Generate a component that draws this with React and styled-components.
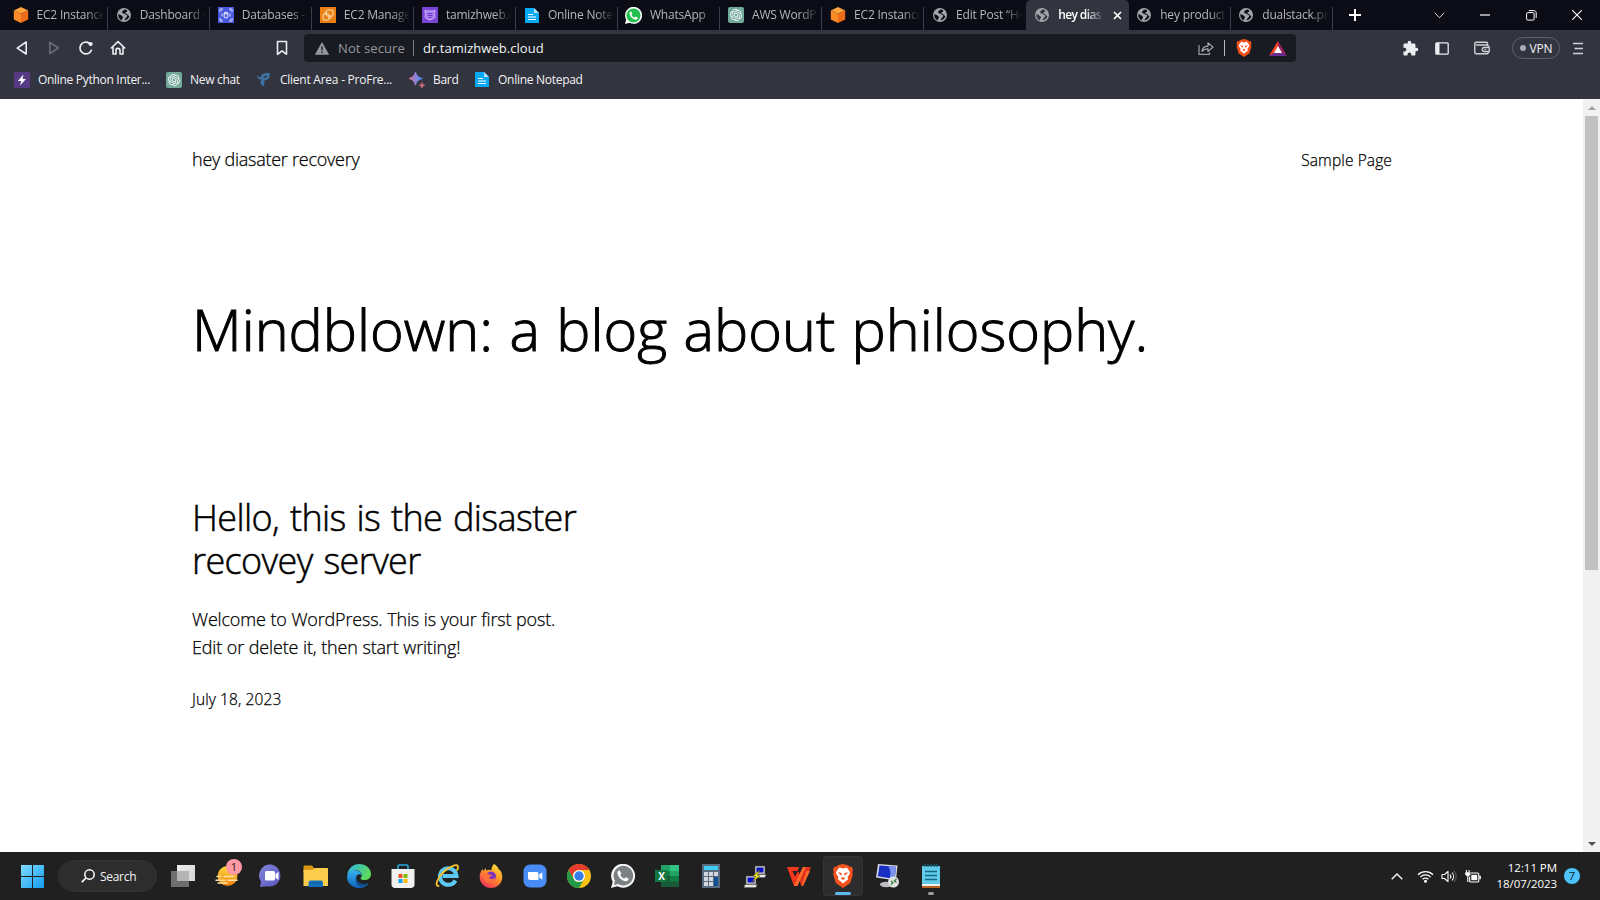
import React from "react";
import styled, { createGlobalStyle, css } from "styled-components";
import { MdExtension } from "react-icons/md";
import { SiOpenai } from "react-icons/si";

const GlobalStyle = createGlobalStyle`
  *, *::before, *::after { box-sizing: border-box; }
  body { margin: 0; overflow: hidden; font-family: "Open Sans", "Noto Sans", sans-serif; background: #fff; }
  svg { display: block; flex: none; }
`;

const Screen = styled.div`
  width: 1600px;
  height: 900px;
  display: flex;
  flex-direction: column;
  overflow: hidden;
`;

const Row = styled.div`
  display: flex;
  align-items: center;
`;

const Cell = styled(Row)`
  flex: none;
  justify-content: center;
  width: ${(p) => p.$w}px;
  height: 100%;
`;

const Spacer = styled.i`
  flex: none;
  width: ${(p) => p.$w}px;
`;

const Grow = styled.i`
  flex: 1;
`;

const IconSlot = styled(Row)`
  flex: none;
  width: 16px;
  justify-content: center;
`;

const Text = styled.span`
  flex: none;
  white-space: nowrap;
  font-size: ${(p) => p.$size}px;
  letter-spacing: ${(p) => p.$track || 0}px;
  color: ${(p) => p.$color || "#f2f3f5"};
`;

/* Light cut thickened slightly, giving a semilight weight */
const semilight = css`
  font-weight: 300;
  -webkit-text-stroke: ${(p) => p.$stroke || 0.25}px currentColor;
`;

/* ---------- tab strip ---------- */
const TabStrip = styled(Row)`
  height: 30px;
  background: #0b0c15;
  padding-left: 6px;
`;

const Tab = styled(Row)`
  flex: none;
  width: 102.05px;
  height: 30px;
  padding: 0 4px 0 ${(p) => (p.$first ? 6.5 : 7.7)}px;
  position: relative;
  ${(p) =>
    p.$active
      ? css`
          padding-right: 7px;
          background: #32343f;
          border-radius: 5px 5px 0 0;
        `
      : !p.$beforeActive &&
        css`
          &::after {
            content: "";
            position: absolute;
            right: 0;
            top: 7px;
            bottom: 0;
            width: 1px;
            background: #3c3d46;
          }
        `}
`;

const TabTitle = styled.span`
  margin-left: 8px;
  flex: ${(p) => (p.$active ? "0 0 46px" : "1 1 0")};
  min-width: 0;
  overflow: hidden;
  white-space: nowrap;
  font-size: 12px;
  line-height: 18px;
  letter-spacing: ${(p) => p.$track}px;
  font-weight: ${(p) => (p.$active ? 600 : 400)};
  color: ${(p) => (p.$active ? "#fff" : "#b6b7bd")};
  mask-image: linear-gradient(to right, #000 calc(100% - 18px), transparent 100%);
`;

const CloseTab = styled(Row)`
  margin-left: auto;
`;

const WindowButtons = styled(Row)`
  margin-left: auto;
  height: 28px;
`;

/* ---------- toolbar ---------- */
const Toolbar = styled(Row)`
  height: 34px;
  padding: 2px 0 0 6px;
  background: #32343f;
`;

const AddressBar = styled(Row)`
  flex: none;
  width: 992px;
  height: 28px;
  margin-left: 6px;
  padding: 0 9px 0 11px;
  background: #181b21;
  border-radius: 4px;
`;

const Divider = styled.i`
  width: 1px;
  height: 16px;
  background: ${(p) => p.$color || "#7c7e84"};
  margin: 0 ${(p) => p.$right}px 0 ${(p) => p.$left}px;
`;

const VpnPill = styled(Row)`
  justify-content: center;
  gap: 4px;
  width: 48px;
  height: 22px;
  margin-left: 14px;
  border: 1px solid #5f626d;
  border-radius: 11px;
`;

const Dot = styled.i`
  width: 6px;
  height: 6px;
  border-radius: 50%;
  background: #a9abbd;
`;

const BookmarksBar = styled(Row)`
  height: 35px;
  padding: 0 0 4px 14px;
  background: #32343f;
`;

const Bookmark = styled(Row)`
  flex: none;
  width: ${(p) => p.$w}px;
  gap: 8px;
`;

/* ---------- page ---------- */
const Viewport = styled.div`
  display: flex;
  height: 753px;
  background: #fff;
`;

const Page = styled.main`
  flex: 1;
  padding: 46px 191px 0 192px;
  color: #000;
`;

const SiteHeader = styled.header`
  display: flex;
  justify-content: space-between;
  height: 28px;
  line-height: 28px;
`;

const SiteTitle = styled.span`
  font-size: 18px;
  letter-spacing: -0.25px;
  ${semilight}
`;

const NavLink = styled.span`
  padding-top: 1px;
  font-size: 15.5px;
  letter-spacing: 0.12px;
  ${semilight}
`;

const Heading = styled.h1`
  margin: 122px 0 0;
  font-size: 57.5px;
  line-height: 68px;
  letter-spacing: 0;
  word-spacing: 1.5px;
  ${semilight}
  white-space: nowrap;
`;

const Post = styled.article`
  margin-top: 133px;
`;

const PostTitle = styled.h2`
  margin: 0;
  font-size: 36px;
  line-height: 43px;
  letter-spacing: -0.6px;
  word-spacing: 2px;
  ${semilight}
`;

const PostExcerpt = styled.p`
  margin: 23px 0 0;
  font-size: 18px;
  line-height: 28px;
  letter-spacing: -0.18px;
  word-spacing: 0.3px;
  ${semilight}
`;

const PostDate = styled.time`
  display: block;
  margin-top: 26px;
  font-size: 15.5px;
  line-height: 24px;
  letter-spacing: 0.1px;
  ${semilight}
`;

const Scrollbar = styled.div`
  display: flex;
  flex-direction: column;
  align-items: center;
  justify-content: space-between;
  width: 17px;
  background: #f1f1f1;
  padding: 7px 0 6px;
`;

const Thumb = styled.div`
  width: 13px;
  height: 454px;
  margin: 6px 0 auto;
  background: #c1c1c1;
`;

/* ---------- taskbar ---------- */
const Taskbar = styled(Row)`
  height: 48px;
  padding-left: 10.5px;
  background: #202020;
`;

const SearchPill = styled(Row)`
  flex: none;
  width: 99px;
  height: 32px;
  margin: 0 4px 0 3.5px;
  padding-left: 22px;
  gap: 5px;
  background: #2d2d2d;
  border: 1px solid #323232;
  border-radius: 16px;
`;

const TaskItem = styled(Row)`
  flex: none;
  justify-content: center;
  position: relative;
  width: 40px;
  height: 40px;
  margin: 0 2px;
  border-radius: 4px;
  ${(p) => p.$active && css`background: #2d2d2d; box-shadow: inset 0 0 0 1px #353535;`}
`;

const Indicator = styled.i`
  position: absolute;
  bottom: 1px;
  left: 50%;
  transform: translateX(-50%);
  width: ${(p) => (p.$wide ? 16 : 6)}px;
  height: 3px;
  border-radius: 2px;
  background: ${(p) => (p.$wide ? "#5cb8ee" : "#9a9a9a")};
`;

const Badge = styled.b`
  position: absolute;
  left: 19px;
  top: 3px;
  width: 16px;
  height: 16px;
  border-radius: 50%;
  background: #ff99a4;
  color: #1c1c1c;
  font-size: 11px;
  font-weight: 400;
  line-height: 16px;
  text-align: center;
`;

const SheetLabel = styled.span`
  position: absolute;
  left: 8px;
  top: 14px;
  width: 13px;
  text-align: center;
  font-size: 10px;
  line-height: 12px;
  font-weight: 700;
  color: #fff;
`;

const Tray = styled(Row)`
  margin-left: auto;
  height: 100%;
`;

const Clock = styled.div`
  width: 70px;
  text-align: right;
  font-size: 11.5px;
  line-height: 16px;
  letter-spacing: -0.05px;
  color: #fff;
`;

const NoticeCount = styled.div`
  width: 16px;
  height: 16px;
  margin: 0 20px 0 7px;
  border-radius: 50%;
  background: #4cc2ff;
  color: #102028;
  font-size: 11px;
  line-height: 16px;
  text-align: center;
`;

/* ---------- drawings ---------- */
const Svg = ({ w = 16, h = w, box = `0 0 ${w} ${h}`, children }) => (
  <svg width={w} height={h} viewBox={box} fill="none">{children}</svg>
);

const Cube = () => (
  <Svg w={16}>
    <path d="M8 0 15.2 3.4 8 6.8.8 3.4Z" fill="#ffa43c" />
    <path d="M.8 3.4 8 6.8V16L.8 12.4Z" fill="#fb8b26" />
    <path d="M15.2 3.4 8 6.8V16l7.2-3.6Z" fill="#ef6c1a" />
  </Svg>
);
const Globe = ({ back = "#0b0c15" }) => (
  <Svg w={14}>
    <circle cx="7" cy="7" r="7" fill="#a3a4aa" />
    <path d="M1.300 6.200c1.800.2 3.300 1.200 4.200 2.200 1 .9.300 1.600-.4 2.500-.3.600-.4 1-.4 1.500C2.500 11.300 1 8.800 1.300 6.200Z" fill={back} />
    <path d="M8.800 1.600C7 1.700 5.600 2.700 5.200 3.900c-.3 1.100.8 1.500 1.900 1.500.9.100.9 1.200 1.900 1.400 1 .1 1.500.5 1.300 1.300-.1.800-.9 1.200-1.500 2-.4.700-.8 1.600-1.800 2.100 2.700.1 5-1.700 5.400-4.300-1.200-.2-1.300-1.200-2.200-1.700-.9-.3-1.700-.4-1.800-1.200 0-.9 1-.9 1.600-1.600.4-.5.100-1.100-1.200-1.800Z" fill={back} />
  </Svg>
);
const Rds = () => (
  <Svg w={16}>
    <path d="M0 0h16v16H0z" fill="#4a5be0" />
    <path d="M2 5V2h3M11 2h3v3M14 11v3h-3M5 14H2v-3M4 6.500v3M12 6.500v3" stroke="#dfe3ff" />
    <path d="m2 2 2 2M14 2l-2 2M14 14l-2-2M2 14l2-2" stroke="#aab3f6" />
    <ellipse cx="8" cy="6" rx="1.800" ry=".8" stroke="#fff" strokeWidth=".9" />
    <path d="M6.200 6v4c0 1.200 3.600 1.200 3.600 0V6" stroke="#fff" strokeWidth=".9" />
  </Svg>
);
const Ec2 = () => (
  <Svg w={16}>
    <path d="M0 0h16v16H0z" fill="#ea7f13" />
    <rect x="6.500" y="3" width="6.500" height="6" rx="1" stroke="#ffe0bd" />
    <rect x="3" y="7" width="6" height="6" rx="1" stroke="#ffe0bd" />
    <path d="M5 7V5h1.500M9 11h2V9" stroke="#ffe0bd" strokeWidth=".8" />
  </Svg>
);
const Route53 = () => (
  <Svg w={16}>
    <path d="M0 0h16v16H0z" fill="#7a45d6" />
    <path d="M3.500 3 5 4h6l1.500-1 .8 2-1 1.500.7 3c0 2-2 2-5 3.500-3-1.500-5-1.500-5-3.500l.7-3-1-1.500Z" fill="#a57df0" stroke="#c9aff8" />
    <path d="M5.500 6.500h5M5.500 8.500h5M6.500 10.500h3" stroke="#7136c6" />
  </Svg>
);
const Doc = () => (
  <Svg w={14} h={15}>
    <path d="M0 0h9l5 5v10H0z" fill="#08a9f4" />
    <path d="M9 0v5h5z" fill="#b5e5fc" />
    <path d="M3 6.500h5M3 9h8M3 11.500h8" stroke="#fff" strokeWidth="1.200" />
  </Svg>
);
const WhatsTab = () => (
  <Svg w={17} box="0 0 24 24">
    <path d="M0 24 1.700 17.800A12 12 0 1 1 6.300 22.300Z" fill="#fff" />
    <circle cx="12" cy="11.900" r="9.900" fill="#20c04e" />
    <path d="M8.500 6.200c-1.500 0-2.700 1.700-2 4 1 3.500 4 6.800 8 7.600 2 .3 3.800-1.200 3.500-3l-3-1.500-1.500 1.700c-2-.7-3.500-2.200-4.400-4.200l1.300-1.500Z" fill="#fff" />
  </Svg>
);
const GptBox = styled(Row)`
  justify-content: center;
  width: 16px;
  height: 16px;
  border-radius: 2px;
  background: #74aa9c;
  color: #fff;
`;
const Gpt = () => <GptBox><SiOpenai size={12} /></GptBox>;

const Lightning = () => (
  <Svg w={16}>
    <path d="M0 0h16v16H0z" fill="#563b84" />
    <path d="M9.500 2.500 3.800 9h3.400L6 13.500 12 7H8.500Z" fill="#fff" />
  </Svg>
);
const ProFree = () => (
  <Svg w={16}>
    <path d="M.5 3.500C1.500 6.500 3 7.700 5.500 7.500V4.500C4 5.500 2.500 5 .5 3.500Z" fill="#4c7199" />
    <path d="M5 3.500C6.500 1.500 9 1 14 1l-.8 5c-1 1.800-3 2.200-4.700 2.500L8 14.500 4.500 12Z" fill="#3f6f9f" />
    <path d="M8 4h3l-.5 1.300L7.800 6Z" fill="#2b3848" />
  </Svg>
);
const Bard = () => (
  <Svg w={17} h={16}>
    <defs><linearGradient id="bard" x1="0" x2="1"><stop stopColor="#d8708e" /><stop offset=".5" stopColor="#8c83d8" /><stop offset="1" stopColor="#3f8ff0" /></linearGradient></defs>
    <path d="M6.500 0C7.600 3.600 9.400 5.400 13.500 6.500 9.400 7.600 7.600 9.400 6.500 13.200 5.400 9.400 3.600 7.600 0 6.500 3.600 5.400 5.400 3.600 6.500 0Z" fill="url(#bard)" stroke="url(#bard)" strokeWidth=".8" />
    <path d="M13 10.500c.4 1.800 1 2.400 2.800 2.800-1.800.4-2.400 1-2.800 2.700-.4-1.700-1-2.300-2.800-2.700 1.800-.4 2.400-1 2.800-2.800Z" fill="#d0707f" stroke="#d0707f" strokeWidth=".8" />
  </Svg>
);

const Tri = ({ left, color }) => (
  <Svg w={12} h={14}>
    <path d={left ? "M10.200 1v12L1.200 7.200Z" : "M1.800 1.500v11l8.700-5.500Z"} stroke={color} strokeWidth="1.600" strokeLinejoin="round" />
  </Svg>
);
const Reload = () => (
  <Svg w={16}>
    <path d="M13.400 10.200A5.900 5.900 0 1 1 11.300 3.200" stroke="#eceef2" strokeWidth="1.700" strokeLinecap="round" />
    <circle cx="12.600" cy="4" r="2.100" fill="#eceef2" />
  </Svg>
);
const Home = () => (
  <Svg w={16}>
    <path d="M1.300 8 8 1.700 14.700 8M3 6.800V14h3v-3.600a2 2 0 0 1 4 0V14h3V6.800" stroke="#eceef2" strokeWidth="1.600" strokeLinejoin="round" strokeLinecap="round" />
  </Svg>
);
const Ribbon = () => (
  <Svg w={12} h={16}><path d="M1.500 1.500h9v12.800L6 10.800l-4.500 3.500Z" stroke="#eceef2" strokeWidth="1.600" strokeLinejoin="round" /></Svg>
);
const Warning = () => (
  <Svg w={14} h={13}><path d="M7 .6 13.700 12.600H.3Z" fill="#96989d" stroke="#96989d" strokeWidth=".6" strokeLinejoin="round" /><path d="M7 4.500v3.800M7 9.600v1.500" stroke="#181b21" strokeWidth="1.400" /></Svg>
);
const Share = () => (
  <Svg w={16} h={14}>
    <path d="M1 4v9.300h10.500v-2" stroke="#9b9da1" strokeWidth="1.200" />
    <path d="M4 10.500c.3-3.500 2.500-5.300 6-5.400V1.800l5 4.400-5 4.200V7.800C7.500 7.700 5.600 8.500 4 10.500Z" stroke="#b3b5b9" strokeWidth="1.100" strokeLinejoin="round" />
  </Svg>
);
const Lion = ({ w, h }) => (
  <Svg w={w} h={h} box="0 0 20 24">
    <path d="m15.200 1.200 1.700 1.700 1.800-.3L20 5.700l-.7 2.200.6 2-2.600 9L10 24l-7.300-5.100-2.600-9 .6-2L0 5.700l1.300-3.100 1.800.3 1.700-1.700L10 0Z" fill="#f4511c" />
    <path d="m6.300 3.600 3.700 1 3.700-1 3.300 4.300-.4 2.300-2 2.500.5 2.500L10 19.500l-5.100-4.300.5-2.500-2-2.500L3 7.900Z" fill="#fff" />
    <path d="m5 8.300 3.500.7.500 2.600L6.800 10.500ZM15 8.300l-3.500.7-.5 2.600 2.200-1.100ZM7.500 14.200l2.500-1 2.500 1L10 16Z" fill="#f4511c" />
  </Svg>
);
const Bat = () => (
  <Svg w={18} h={15}>
    <path d="M9 0 9 6 5 12 0 15Z" fill="#ff4724" />
    <path d="M9 0 18 15 13 12 9 6Z" fill="#9e1f63" />
    <path d="M0 15 5 12h8l5 3Z" fill="#662d91" />
    <path d="m9 5 4 7H5Z" fill="#fff" />
  </Svg>
);
const Sidebar = () => (
  <Svg w={14} h={13}><rect x=".8" y=".8" width="12.400" height="11.400" rx="1" stroke="#eceef2" strokeWidth="1.300" /><path d="M1 1h3.500v11H1z" fill="#eceef2" /></Svg>
);
const Wallet = () => (
  <Svg w={16} h={14}>
    <path d="M13.500 4V2.200c0-.6-.4-1-1-1H2.200c-.8 0-1.400.6-1.400 1.300v9c0 .8.600 1.300 1.400 1.300h11c.6 0 1-.4 1-1V5c0-.6-.4-1-1-1H2" stroke="#cfd1d6" strokeWidth="1.400" />
    <path d="M15.300 6.500h-5a2 2 0 0 0 0 4h5Z" fill="#32343f" stroke="#cfd1d6" strokeWidth="1.300" />
    <path d="M10.500 8.500h1.500" stroke="#cfd1d6" strokeWidth="1.200" />
  </Svg>
);
const Menu = () => (
  <Svg w={10} h={13}><path d="M0 1.500h10M1.500 6.500H10M0 11.500h10" stroke="#cfd1d6" strokeWidth="1.700" /></Svg>
);

const Start = () => (
  <Svg w={23}>
    <defs><linearGradient id="win" x1="0" y1="0" x2="1" y2="1"><stop stopColor="#7fdcff" /><stop offset="1" stopColor="#159bee" /></linearGradient></defs>
    <path d="M0 0h11v11H0zM12 0h11v11H12zM0 12h11v11H0zM12 12h11v11H12z" fill="url(#win)" />
  </Svg>
);
const TaskView = () => (
  <Svg w={24} h={22}>
    <defs><linearGradient id="tv" x1="0" y1="0" x2="1" y2="1"><stop stopColor="#ededed" /><stop offset="1" stopColor="#d4d4d4" /></linearGradient></defs>
    <path d="M0 6h18v16H0z" fill="#6e6e6e" /><path d="M6 0h18v16H6z" fill="url(#tv)" /><path d="M6 6h12v10H6z" fill="#b4b4b4" />
  </Svg>
);
const Weather = () => (
  <Svg w={24} h={24}>
    <defs><linearGradient id="sun" x1="0" y1="0" x2="0" y2="1"><stop stopColor="#ffd83a" /><stop offset="1" stopColor="#ef8310" /></linearGradient></defs>
    <circle cx="12.500" cy="12" r="10" fill="url(#sun)" />
    <path d="M2 12.500h4M9 12.500h10M1 16.300h9M13 16.300h9M3 19h9" stroke="#ffe0a0" strokeWidth="1.500" strokeLinecap="round" />
  </Svg>
);
const Chat = () => (
  <Svg w={24}>
    <defs><linearGradient id="chat" x1="0" y1="0" x2="1" y2="1"><stop stopColor="#8388dc" /><stop offset="1" stopColor="#5b55c0" /></linearGradient></defs>
    <path d="M12.500.5A11 11 0 1 1 8 22.300L1 23 2 17.500A11 11 0 0 1 12.500.5Z" fill="url(#chat)" />
    <rect x="6" y="7" width="10" height="9.500" rx="1.500" fill="#fff" /><path d="m16.500 10 3-2v8l-3-2.300Z" fill="#fff" />
  </Svg>
);
const Folder = () => (
  <Svg w={25} h={22}>
    <path d="M.5 2c0-1 .5-1.500 1.500-1.500h7L11 3v4H.5Z" fill="#d9960f" />
    <path d="M.5 5h9l2-2H24c.6 0 1 .4 1 1v17H.5Z" fill="#fccc4c" />
    <path d="M5.500 22v-4c0-1.500.8-2.500 2.300-2.500h10c1.400 0 2.200 1 2.200 2.500v4Z" fill="#1272bd" />
    <path d="M7 18h12" stroke="#0e5b9c" />
  </Svg>
);
const Edge = () => (
  <Svg w={24}>
    <defs>
      <linearGradient id="eg1" x1="0" y1="0" x2="1" y2=".4"><stop stopColor="#2fb5ee" /><stop offset="1" stopColor="#5bd95a" /></linearGradient>
      <linearGradient id="eg2" x1="0" y1="0" x2="0" y2="1"><stop stopColor="#35b4f0" /><stop offset="1" stopColor="#0f5fb8" /></linearGradient>
    </defs>
    <path d="M.3 11C1 4.500 6 0 12.300 0 19 0 24 4.500 24 10c0 4-3 6-6.500 6-2.500 0-4-.8-4-1.600 0-.7 1.200-1.200 1.200-3.200C14.700 7 10 5.500 6.500 6.500 3.500 7.300 1 9 .3 11Z" fill="url(#eg1)" />
    <path d="M0 12.500C.5 8.500 4 6 8 6.200c3.700.2 6.500 2.300 6.700 5-1.500-1.700-5.700-1-5.700 3 0 4.200 4.500 7 9.500 6 1.500-.3 2.500-.7 3.500-1.200C19.800 22.300 16.500 24 12 24 5.500 24-.3 19 0 12.500Z" fill="url(#eg2)" />
    <path d="M9 13.500c-1.500 3.500.8 8 5.500 9 3.500.2 6-1.500 7.500-3.500-5 2.500-11.500.5-13-5.500Z" fill="#114a8b" />
  </Svg>
);
const Store = () => (
  <Svg w={24}>
    <path d="M7 5V2.200C7 1.500 7.500 1 8.200 1h7.600c.7 0 1.200.5 1.200 1.200V5" stroke="#2aa8e0" strokeWidth="1.600" />
    <path d="M.5 5h23v15.500c0 2-1.500 3.500-3.500 3.500H4c-2 0-3.500-1.500-3.500-3.500Z" fill="#f1f1f1" />
    <path d="M7.500 10h4v4h-4z" fill="#f25022" /><path d="M12.500 10h4v4h-4z" fill="#7fba00" /><path d="M7.500 15h4v4h-4z" fill="#00a4ef" /><path d="M12.500 15h4v4h-4z" fill="#ffb900" />
  </Svg>
);
const Explorer = () => (
  <Svg w={24} h={24}>
    <path d="M20.500 16.500a8.300 8.300 0 1 1 1-4.500H7.500" stroke="#5cc8f5" strokeWidth="4" />
    <path d="M3.500 22C-1 22 3 13 9 7.500 15 2 22.500-.5 23 2.500c.2 1-.3 2.500-1 3.500" stroke="#f6c32c" strokeWidth="1.800" strokeLinecap="round" />
  </Svg>
);
const Firefox = () => (
  <Svg w={24}>
    <defs><linearGradient id="ff" x1=".8" y1="0" x2=".2" y2="1"><stop stopColor="#ffe23e" /><stop offset=".45" stopColor="#ff9425" /><stop offset="1" stopColor="#f0275d" /></linearGradient></defs>
    <path d="M15 0c3.500 2.200 4.500 4.200 4.800 5.500 1-.2 3.500 3 3.500 7.500C23.300 19 18.500 24 12 24S.7 19 .7 13c0-3 1-5.500 2.800-8.500 0 1 .3 2 .8 2.700L6.500 4l.8 2.500c2-1 4-.8 5 0C12.500 4 13 1.800 15 0Z" fill="url(#ff)" />
    <circle cx="12" cy="12.500" r="5" fill="#7a35c4" />
    <path d="M4.500 9.500c2-1 4.500-.5 5.500 1l3 .5c0 1.500-2.500 1.500-3 3 1.500 2 5.500 1 6-1.500 0 5-4 7-7.500 6S4 13.500 4.500 9.500Z" fill="#ff7138" />
  </Svg>
);
const Zoom = () => (
  <Svg w={24}>
    <rect x=".5" y=".5" width="23" height="23" rx="6.500" fill="#4a8cf7" />
    <path d="M5 8h8.500c1.400 0 2 .8 2 2v6H7c-1.400 0-2-.8-2-2Z" fill="#fff" /><path d="m16.300 10.500 3-2.300v7.600l-3-2.300Z" fill="#fff" />
  </Svg>
);
const ChromeLogo = () => (
  <Svg w={24}>
    <circle cx="12" cy="12" r="12" fill="#fbc116" />
    <path d="M1.600 6A12 12 0 0 1 22.400 6H12a6 6 0 0 0-5.200 9Z" fill="#e33b2e" />
    <path d="M1.600 6A12 12 0 0 0 12 24l5.200-9a6 6 0 0 1-10.400 0Z" fill="#229a4a" />
    <circle cx="12" cy="12" r="6" fill="#fff" /><circle cx="12" cy="12" r="4.700" fill="#377fe8" />
  </Svg>
);
const WhatsDesktop = () => (
  <Svg w={24}>
    <path d="M0 24 1.700 17.800A12 12 0 1 1 6.300 22.300Z" fill="#f5f5f5" />
    <path d="m3 21 1-4.200A9.800 9.800 0 1 1 7.200 20Z" fill="#7b8183" />
    <path d="M8.500 6.500c-1.500 0-2.500 1.700-1.800 3.800 1 3.300 4 6.200 7.500 7 2 .3 3.500-1 3.300-2.700l-2.800-1.400-1.400 1.600c-2-.7-3.300-2.200-4.100-4l1.200-1.400Z" fill="#fff" />
  </Svg>
);
const Excel = () => (
  <>
    <Svg w={24} h={22}>
      <path d="M6 0h9v6H6z" fill="#21a366" /><path d="M15 0h9v6h-9z" fill="#33c481" /><path d="M6 6h9v5H6z" fill="#107c41" /><path d="M15 6h9v5h-9z" fill="#21a366" />
      <path d="M6 11h18v11H6z" fill="#185c37" /><path d="M15 11h9v5.500h-9z" fill="#107c41" /><path d="M0 5h12v12H0z" fill="#14753f" />
    </Svg>
    <SheetLabel>X</SheetLabel>
  </>
);
const Calc = () => (
  <Svg w={18} h={24}>
    <path d="M0 0h18v24H0z" fill="#596b7c" /><path d="M2 2h14v4H2z" fill="#3ecbf5" />
    <path d="M2 8h4v4H2zM7 8h4v4H7zM12 8h4v4h-4zM2 13h4v4H2zM7 13h4v4H7zM2 18h4v4H2zM7 18h4v4H7z" fill="#d5dade" /><path d="M12 13h4v9h-4z" fill="#0f4f96" />
  </Svg>
);
const Putty = () => (
  <Svg w={23} h={23}>
    <path d="M11 1h10v8H11zM2 11h10v8H2z" fill="#d8d8d0" stroke="#3d3d3d" strokeWidth=".6" />
    <path d="M12.500 2.500h7v5h-7zM3.500 12.500h7v5h-7z" fill="#0712c7" />
    <path d="M11 9.500h11l-1 3h-8ZM1 19.500h12l-1 3H0Z" fill="#e6e6e0" stroke="#555" strokeWidth=".5" />
    <path d="m16 5-7 6 3 .5L8 17l8-6-3-.5Z" fill="#ffee1a" stroke="#4d4800" strokeWidth=".5" />
  </Svg>
);
const Wps = () => (
  <Svg w={24} h={19}>
    <path d="M0 0h12L10.500 4H5.500L8 9.500 11 4l2 4-5 11H7Z" fill="#f4371f" />
    <path d="M14.500 19 12.500 14 17 4h-3l2-4h8l-8 19Z" fill="#e3301c" />
    <path d="M7 19 13 6l3-6h3l-8.500 19ZM14.500 19 19.500 4h3.500l-7 15Z" fill="#ff6a2c" />
  </Svg>
);
const Remote = () => (
  <Svg w={23} h={24}>
    <ellipse cx="10" cy="20.500" rx="6" ry="2.700" fill="#bcbcc0" />
    <path d="m2 0 19.500 1.500-1.500 15L0 13.500Z" fill="#d5d8df" />
    <path d="M3.500 1.500 20 2.800 18.700 15 1.800 12.300Z" fill="#1831c4" /><path d="m12 2.200 8 .6L18.700 15l-5-.8C15 9 14.500 5 12 2.200Z" fill="#7a93e8" />
    <circle cx="17.500" cy="18" r="5.500" fill="#dfe2df" /><path d="m15 17 2 1.500-2 2M20.500 15l-2 2 2 1.500" stroke="#2b7d38" strokeWidth="1.300" />
  </Svg>
);
const Notepad = () => (
  <Svg w={18} h={24}>
    <path d="M0 2h18v20H0z" fill="#62cbe8" /><path d="M0 20h18v2H0z" fill="#f2f2f2" /><path d="M0 22h18v2H0z" fill="#b5611f" />
    <path d="M3 0v3M6 0v3M9 0v3M12 0v3M15 0v3" stroke="#17627f" strokeWidth="1.400" />
    <path d="M3 7.500h12M3 11.500h12M3 15.500h12" stroke="#136987" strokeWidth="1.600" />
  </Svg>
);

const tabs = [
  { icon: Cube, title: "EC2 Instance" },
  { icon: Globe, title: "Dashboard ‹" },
  { icon: Rds, title: "Databases -" },
  { icon: Ec2, title: "EC2 Manage" },
  { icon: Route53, title: "tamizhweb.c" },
  { icon: Doc, title: "Online Note" },
  { icon: WhatsTab, title: "WhatsApp" },
  { icon: Gpt, title: "AWS WordP" },
  { icon: Cube, title: "EC2 Instance" },
  { icon: Globe, title: "Edit Post “He" },
  { icon: () => <Globe back="#32343f" />, title: "hey dias", active: true },
  { icon: Globe, title: "hey product" },
  { icon: Globe, title: "dualstack.pr" },
];

const bookmarks = [
  { icon: Lightning, title: "Online Python Inter...", w: 152, track: -0.3 },
  { icon: Gpt, title: "New chat", w: 90, track: -0.3 },
  { icon: ProFree, title: "Client Area - ProFre...", w: 153, track: -0.25 },
  { icon: Bard, title: "Bard", w: 65, track: -0.3 },
  { icon: Doc, title: "Online Notepad", w: 110, track: -0.28 },
];

const apps = [
  TaskView, Weather, Chat, Folder, Edge, Store, Explorer, Firefox, Zoom, ChromeLogo,
  WhatsDesktop, Excel, Calc, Putty, Wps, () => <Lion w={20} h={24} />, Remote, Notepad,
];

export default function App() {
  return (
    <Screen>
      <GlobalStyle />
      <TabStrip>
        {tabs.map(({ icon: Icon, title, active }, i) => (
          <Tab key={i} $first={i === 0} $active={active} $beforeActive={tabs[i + 1]?.active}>
            <IconSlot><Icon /></IconSlot>
            <TabTitle $active={active} $track={active ? -0.6 : -0.2}>{title}</TabTitle>
            {active && (
              <CloseTab><Svg w={9}><path d="m1 1 7 7M8 1 1 8" stroke="#fff" strokeWidth="1.700" /></Svg></CloseTab>
            )}
          </Tab>
        ))}
        <Cell $w={44}><Svg w={12}><path d="M6 0v12M0 6h12" stroke="#fff" strokeWidth="2" /></Svg></Cell>
        <WindowButtons>
          <Cell $w={46}><Svg w={11} h={7}><path d="m.7.700 4.800 5 4.800-5" stroke="#d9d9dc" /></Svg></Cell>
          <Cell $w={46}><Svg w={10} h={2}><path d="M0 1h10" stroke="#fff" strokeWidth="1.200" /></Svg></Cell>
          <Cell $w={46}><Svg w={11}><rect x=".6" y="2.600" width="7.500" height="7.500" rx="1.200" stroke="#fff" /><path d="M2.800.600h5c1.400 0 2.400 1 2.400 2.400v5" stroke="#fff" /></Svg></Cell>
          <Cell $w={46}><Svg w={10}><path d="m.3.300 9.400 9.400M9.700.300.300 9.700" stroke="#fff" strokeWidth="1.100" /></Svg></Cell>
        </WindowButtons>
      </TabStrip>

      <Toolbar>
        <Cell $w={32}><Tri left color="#eceef2" /></Cell>
        <Cell $w={32}><Tri color="#6b6d76" /></Cell>
        <Cell $w={32}><Reload /></Cell>
        <Cell $w={32}><Home /></Cell>
        <Spacer $w={132} />
        <Cell $w={32}><Ribbon /></Cell>
        <AddressBar>
          <Warning />
          <Spacer $w={9} />
          <Text $size={13} $track={0.1} $color="#96989d">Not secure</Text>
          <Divider $left={8} $right={9} />
          <Text $size={13} $track={0.05}>dr.tamizhweb.cloud</Text>
          <Grow />
          <Share />
          <Divider $left={10} $right={11} $color="#b8b9bc" />
          <Lion w={16} h={18} />
          <Spacer $w={17} />
          <Bat />
        </AddressBar>
        <Spacer $w={106} />
        <MdExtension size={17} color="#eceef2" />
        <Spacer $w={16} />
        <Sidebar />
        <Spacer $w={25} />
        <Wallet />
        <Spacer $w={8} />
        <VpnPill><Dot /><Text $size={12} $track={-0.2}>VPN</Text></VpnPill>
        <Spacer $w={13} />
        <Menu />
      </Toolbar>

      <BookmarksBar>
        {bookmarks.map(({ icon: Icon, title, w, track }) => (
          <Bookmark key={title} $w={w}>
            <IconSlot><Icon /></IconSlot>
            <Text $size={12} $track={track}>{title}</Text>
          </Bookmark>
        ))}
      </BookmarksBar>

      <Viewport>
        <Page>
          <SiteHeader>
            <SiteTitle>hey diasater recovery</SiteTitle>
            <NavLink>Sample Page</NavLink>
          </SiteHeader>
          <Heading $stroke={1}>Mindblown: a blog about philosophy.</Heading>
          <Post>
            <PostTitle $stroke={0.5}>Hello, this is the disaster<br />recovey server</PostTitle>
            <PostExcerpt>Welcome to WordPress. This is your first post.<br />Edit or delete it, then start writing!</PostExcerpt>
            <PostDate>July 18, 2023</PostDate>
          </Post>
        </Page>
        <Scrollbar>
          <Svg w={8} h={4}><path d="M4 0 8 4H0Z" fill="#a3a3a3" /></Svg>
          <Thumb />
          <Svg w={8} h={4}><path d="M4 4 8 0H0Z" fill="#505050" /></Svg>
        </Scrollbar>
      </Viewport>

      <Taskbar>
        <TaskItem><Start /></TaskItem>
        <SearchPill>
          <Svg w={14}><circle cx="8.500" cy="5.500" r="4.700" stroke="#fff" strokeWidth="1.500" /><path d="M5 9 .800 13.200" stroke="#fff" strokeWidth="1.700" /></Svg>
          <Text $size={12} $track={-0.3}>Search</Text>
        </SearchPill>
        {apps.map((Icon, i) => (
          <TaskItem key={i} $active={i === 15}>
            <Icon />
            {i === 1 && <Badge>1</Badge>}
            {i === 15 && <Indicator $wide />}
            {i === 17 && <Indicator />}
          </TaskItem>
        ))}
        <Tray>
          <Cell $w={28}><Svg w={12} h={7}><path d="m.7 6.300 5.300-5.300 5.300 5.300" stroke="#fff" strokeWidth="1.300" /></Svg></Cell>
          <Cell $w={28}>
            <Svg w={17} h={13}>
              <path d="M1 4.800a10.600 10.600 0 0 1 15 0M3.300 7.100a7.300 7.300 0 0 1 10.400 0M5.600 9.300a4.100 4.100 0 0 1 5.800 0" stroke="#fff" strokeWidth="1.300" />
              <circle cx="8.500" cy="11.200" r="1.500" fill="#fff" />
            </Svg>
          </Cell>
          <Cell $w={20}>
            <Svg w={16} h={13}>
              <path d="M1 4.500h2.500L7 1.300v10.400L3.500 8.500H1Z" stroke="#fff" strokeWidth="1.100" strokeLinejoin="round" />
              <path d="M9 4.500a3 3 0 0 1 0 4M11 2.500a6 6 0 0 1 0 8" stroke="#fff" strokeWidth="1.100" />
              <path d="M13 .8a8.500 8.500 0 0 1 0 11.400" stroke="#666" />
            </Svg>
          </Cell>
          <Cell $w={28}>
            <Svg w={16} h={13}>
              <rect x="4.600" y="3" width="9.200" height="9" rx="1.300" stroke="#fff" strokeWidth="1.100" />
              <path d="M6.300 4.800h5.900v5.400H6.300z" fill="#fff" /><path d="M15.100 5.800v3.400" stroke="#fff" strokeWidth="1.500" />
              <path d="M0 0h6v5.500L4 7v6H1.500V7L0 5.500Z" fill="#202020" />
              <path d="M.2 2.200h5.200v2.300L3.900 6H1.700L.2 4.500Z" fill="#fff" />
              <path d="M1.500 0v2.500M4.100 0v2.500M2.800 6v6" stroke="#fff" strokeWidth="1.100" />
            </Svg>
          </Cell>
          <Clock>12:11 PM<br />18/07/2023</Clock>
          <NoticeCount>7</NoticeCount>
        </Tray>
      </Taskbar>
    </Screen>
  );
}
